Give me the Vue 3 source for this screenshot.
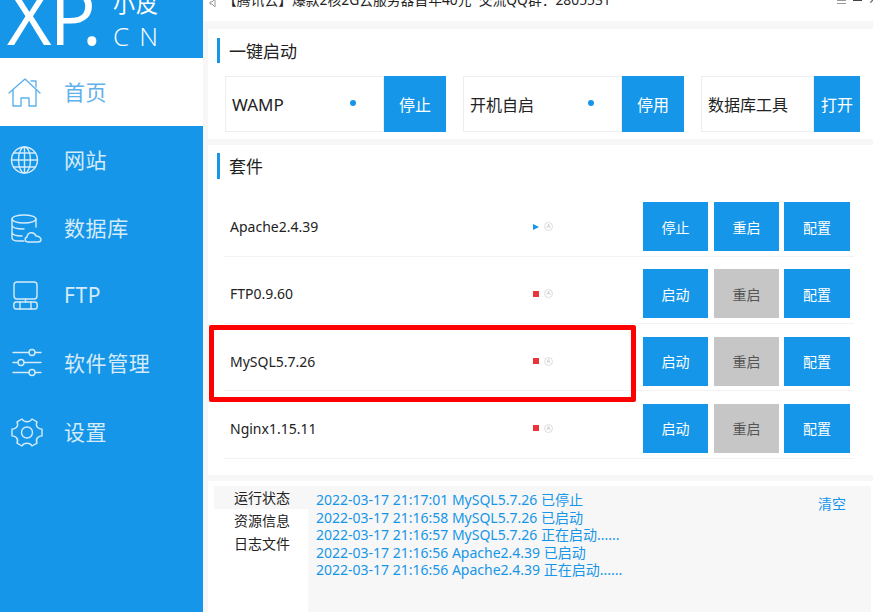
<script setup>
const navItems = [
  { label: '首页', icon: 'home', active: true },
  { label: '网站', icon: 'globe' },
  { label: '数据库', icon: 'db' },
  { label: 'FTP', icon: 'ftp' },
  { label: '软件管理', icon: 'sliders' },
  { label: '设置', icon: 'gear' },
]
const quick = [
  { label: 'WAMP', btn: '停止', dot: true, boxW: 159, btnW: 62, latin: true },
  { label: '开机自启', btn: '停用', dot: true, boxW: 159, btnW: 62 },
  { label: '数据库工具', btn: '打开', dot: false, boxW: 113, btnW: 46 },
]
const rows = [
  { name: 'Apache2.4.39', running: true, first: '停止', restartOff: false },
  { name: 'FTP0.9.60', running: false, first: '启动', restartOff: true },
  { name: 'MySQL5.7.26', running: false, first: '启动', restartOff: true },
  { name: 'Nginx1.15.11', running: false, first: '启动', restartOff: true },
]
const tabs = ['运行状态', '资源信息', '日志文件']
const logs = [
  '2022-03-17 21:17:01 MySQL5.7.26 已停止',
  '2022-03-17 21:16:58 MySQL5.7.26 已启动',
  '2022-03-17 21:16:57 MySQL5.7.26 正在启动......',
  '2022-03-17 21:16:56 Apache2.4.39 已启动',
  '2022-03-17 21:16:56 Apache2.4.39 正在启动......',
]
</script>

<template>
  <div class="app">
    <aside class="side">
      <div class="logo">
        <span class="xp">XP<span class="pt">.</span></span>
        <div class="logo-r">
          <span class="xiaopi">小皮</span>
          <span class="cn">CN</span>
        </div>
      </div>
      <nav>
        <div v-for="n in navItems" :key="n.label" class="nav" :class="{ active: n.active }">
          <svg class="ico" viewBox="0 0 34 34" fill="none" stroke="currentColor" stroke-width="1.4" stroke-linejoin="round" stroke-linecap="round">
            <template v-if="n.icon === 'home'">
              <path d="M1 18 17 4l15 14" />
              <path d="M23 6h5v6" />
              <path d="M5 15v16h8v-8h8v8h7V15" />
            </template>
            <template v-else-if="n.icon === 'globe'">
              <circle cx="16.500" cy="17" r="13" />
              <ellipse cx="16.500" cy="17" rx="6" ry="13" />
              <path d="M16.500 4v26M3.500 17h26M5.500 10h22M5.500 24h22" />
            </template>
            <template v-else-if="n.icon === 'db'">
              <ellipse cx="16" cy="8" rx="12" ry="4" />
              <path d="M4 8v19c0 2 3 3 7 3h5M28 8v8M4 14c0 3 5 4 12 4M4 21c0 2 3 4 10 4" />
              <path d="M20 31c-3 0-4-4-1-5 .5-5 7-6 9-1 3 0 5 2 5 3.500s-1 2.500-3 2.500z" />
            </template>
            <template v-else-if="n.icon === 'ftp'">
              <rect x="6" y="3" width="23" height="17" rx="3" />
              <path d="M17.500 20v3" />
              <path d="M8 23h19c3 0 3 7 0 7H8c-3 0-3-7 0-7z" />
              <path d="M12 23v7M23 23v7" />
            </template>
            <template v-else-if="n.icon === 'sliders'">
              <path d="M5 6.500h16M27 6.500h6M5 16.500h5M16 16.500h17M5 26.500h16M27 26.500h6" />
              <circle cx="24" cy="6.500" r="3" />
              <circle cx="13" cy="16.500" r="3" />
              <circle cx="24" cy="26.500" r="3" />
            </template>
            <g v-else transform="translate(3 .5)">
              <path d="M11 3.500c1 2 2.600 2.700 5 2.700s4-.7 5-2.700l5 2.800c-1 2.200-.8 4 .5 5.500 1 1 2.500 1.700 4.500 1.800v6.800c-2 .1-3.500.8-4.500 1.800-1.300 1.500-1.500 3.300-.5 5.500l-5 2.800c-1-2-2.600-2.700-5-2.700s-4 .7-5 2.700l-5-2.800c1-2.200.8-4-.5-5.500-1-1-2.500-1.700-4.500-1.800v-6.800c2-.1 3.500-.8 4.500-1.800 1.300-1.500 1.500-3.300.5-5.500z" />
              <circle cx="16" cy="17" r="5.500" />
            </g>
          </svg>
          <span class="nav-label">{{ n.label }}</span>
        </div>
      </nav>
    </aside>

    <main class="main">
      <header class="topbar">
        <svg class="speaker" viewBox="0 0 10 10" fill="none" stroke="#9a9a9a" stroke-width="1"><path d="M1 3h2l3-3v8L3 5H1z" /></svg>
        <span class="notice">【腾讯云】爆款2核2G云服务器首年40元&nbsp; 交流QQ群：2805531</span>
        <span class="winbtns">
          <i class="menu"></i>
          <i class="min"></i>
          <i class="close">×</i>
        </span>
      </header>

      <section class="card one">
        <h2 class="title">一键启动</h2>
        <div class="quick">
          <div v-for="q in quick" :key="q.label" class="qitem">
            <div class="qbox" :class="{ latin: q.latin }" :style="{ width: q.boxW + 'px' }">
              <span>{{ q.label }}</span>
              <i v-if="q.dot" class="dot"></i>
            </div>
            <button class="qbtn" :style="{ width: q.btnW + 'px' }">{{ q.btn }}</button>
          </div>
        </div>
      </section>

      <section class="card two">
        <h2 class="title">套件</h2>
        <div class="rows">
          <div v-for="r in rows" :key="r.name" class="row">
            <span class="name">{{ r.name }}</span>
            <span class="status">
              <i v-if="r.running" class="tri"></i>
              <i v-else class="sq"></i>
              <span class="auto">A</span>
            </span>
            <div class="btns">
              <button class="sbtn">{{ r.first }}</button>
              <button class="sbtn" :class="{ off: r.restartOff }">重启</button>
              <button class="sbtn cfg">配置</button>
            </div>
          </div>
        </div>
        <div class="mark"></div>
      </section>

      <section class="bottom">
        <div class="tabs">
          <div v-for="(t, i) in tabs" :key="t" class="tab" :class="{ cur: i === 0 }">{{ t }}</div>
        </div>
        <div class="logs">
          <div v-for="(l, i) in logs" :key="i" class="log">{{ l }}</div>
          <a class="clear">清空</a>
        </div>
      </section>
    </main>
  </div>
</template>

<style>
html, body { margin: 0; background: #fff; overflow: hidden; }
</style>

<style scoped>
.app {
  width: 877px;
  height: 612px;
  display: flex;
  overflow: hidden;
  font-family: "Noto Sans", "Noto Sans CJK SC", sans-serif;
  color: #222;
}
.side {
  width: 203px;
  flex: none;
  background: #1696e8;
  color: #fff;
}
.logo {
  height: 58px;
  display: flex;
  padding-left: 7px;
  overflow: hidden;
}
.xp {
  font-family: "Open Sans", "Noto Sans", sans-serif;
  font-size: 77px;
  line-height: 70px;
  margin-top: -19px;
  letter-spacing: -2px;
  width: 106px;
  flex: none;
}
.pt { margin-left: -12px; }
.logo-r {
  display: flex;
  flex-direction: column;
  margin-top: -12px;
}
.xiaopi { font-size: 22px; line-height: 30px; letter-spacing: 1px; }
.cn {
  font-family: "Open Sans", "Noto Sans", sans-serif;
  font-size: 26px;
  line-height: 30px;
  letter-spacing: 10px;
  font-weight: 300;
  margin-top: 3px;
}
.nav {
  height: 68px;
  display: flex;
  align-items: center;
  color: #d5ebfa;
}
.nav:nth-child(5) { height: 65px; }
.nav:nth-child(6) { height: 73px; }
.nav.active { background: #fff; color: #5fb1ec; }
.ico { width: 34px; height: 34px; margin-left: 8px; flex: none; overflow: visible; }
.nav-label {
  margin-left: 22px;
  margin-bottom: 2px;
  font-size: 21px;
  letter-spacing: .6px;
}
.main {
  width: 670px;
  flex: none;
  background: #f7f7f7;
  display: flex;
  flex-direction: column;
  position: relative;
}
.topbar {
  height: 21px;
  background: #fff;
  display: flex;
  align-items: flex-end;
  overflow: hidden;
  position: relative;
  padding-left: 5px;
}
.speaker { width: 10px; height: 10px; position: absolute; left: 6px; top: -1px; }
.notice {
  font-size: 13.800px;
  line-height: 18px;
  margin-left: 15px;
  margin-bottom: 12px;
  white-space: nowrap;
}
.winbtns { position: absolute; right: 0; top: 0; display: block; width: 40px; height: 6px; }
.winbtns i { position: absolute; display: block; }
.menu { left: 4px; top: 0; width: 9px; height: 4px; border-bottom: 1px solid #999; border-top: 1px solid #999; box-sizing: border-box; }
.min { left: 20px; top: 0; width: 9px; height: 1px; background: #444; }
.close { left: 36px; top: -10px; font-style: normal; font-size: 14px; color: #555; }
.card { background: #fff; margin-left: 5px; width: 665px; }
.one { margin-top: 8px; height: 110px; padding: 9px 0 0 9px; box-sizing: border-box; }
.two { margin-top: 6px; height: 330px; padding: 8px 0 0 9px; box-sizing: border-box; position: relative; }
.title {
  margin: 0;
  height: 25px;
  border-left: 3px solid #1696e8;
  padding-left: 9px;
  font-size: 17px;
  font-weight: 400;
  line-height: 27px;
}
.two .title { height: 26px; }
.quick { display: flex; margin: 13px 0 0 8px; }
.qitem { display: flex; height: 56px; margin-right: 17px; }
.qbox {
  box-sizing: border-box;
  border: 1px solid #eee;
  display: flex;
  align-items: center;
  padding-left: 6px;
  font-size: 16px;
  position: relative;
}
.qbox.latin { font-size: 17px; }
.dot {
  position: absolute;
  left: 124px;
  top: 23px;
  width: 6px;
  height: 6px;
  border-radius: 50%;
  background: #1696e8;
}
.qbtn {
  border: 0;
  padding: 0;
  background: #1696e8;
  color: #fff;
  font: inherit;
  font-size: 16px;
}
.rows { margin: 0 19px 0 7px; padding-top: 10.500px; }
.row {
  height: 67.330px;
  box-sizing: border-box;
  display: flex;
  align-items: center;
  border-bottom: 1px solid #f3f3f3;
  padding: 12.500px 0 4.830px 6px;
}
.name { font-size: 14px; width: 303px; flex: none; }
.status { display: flex; align-items: center; width: 110px; flex: none; }
.tri { width: 0; height: 0; border-left: 6px solid #1696e8; border-top: 3px solid transparent; border-bottom: 3px solid transparent; }
.sq { width: 6px; height: 6px; background: #e8353b; }
.auto {
  margin-left: 5px;
  width: 7px;
  height: 7px;
  line-height: 7px;
  border: 1px solid #ddd;
  border-radius: 50%;
  text-align: center;
  font-size: 6px;
  color: #bbb;
}
.btns { display: flex; gap: 6px; }
.sbtn {
  width: 65px;
  height: 49px;
  border: 0;
  padding: 0;
  background: #1696e8;
  color: #fff;
  font: inherit;
  font-size: 14px;
}
.sbtn.cfg { width: 66px; margin-left: -1px; }
.sbtn.off { background: #c6c6c6; color: #555; }
.mark {
  position: absolute;
  left: 1px;
  top: 180px;
  width: 427px;
  height: 77px;
  box-sizing: border-box;
  border: 5px solid #f00;
  border-radius: 2px;
}
.bottom {
  margin-top: 6px;
  margin-left: 5px;
  flex: 1;
  display: flex;
  background: #fff;
  padding: 5px 2px 0 6px;
}
.tabs { width: 94px; flex: none; font-size: 14px; }
.tab { height: 23px; line-height: 23px; padding-left: 20px; }
.tab.cur { background: #f7f7f7; }
.logs {
  flex: 1;
  background: #f7f7f7;
  position: relative;
  padding: 5px 0 0 8px;
  color: #1696e8;
  font-size: 14px;
}
.log { line-height: 17.500px; white-space: nowrap; }
.clear { position: absolute; left: 510px; top: 8px; font-size: 14px; line-height: 20px; }
</style>
